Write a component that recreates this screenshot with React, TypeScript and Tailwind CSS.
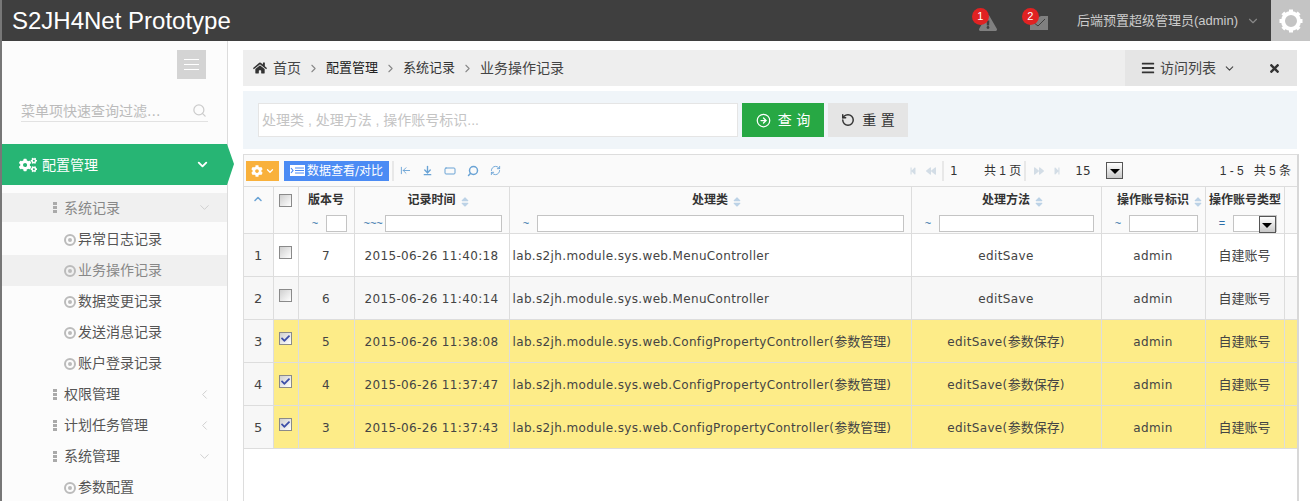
import {
  FaBackward,
  FaBars,
  FaCheck,
  FaCog,
  FaCogs,
  FaExclamationTriangle,
  FaForward,
  FaHome,
  FaSort,
  FaStepBackward,
  FaStepForward,
  FaTimes,
} from "react-icons/fa"
import {
  ArrowDownToLine,
  ArrowLeftToLine,
  ChevronDown,
  ChevronLeft,
  ChevronRight,
  ChevronUp,
  CircleArrowRight,
  RectangleHorizontal,
  RefreshCw,
  RotateCcw,
  Search,
} from "lucide-react"

const rows = [
  { n: 1, v: 7, t: "2015-06-26 11:40:18", c: "lab.s2jh.module.sys.web.MenuController", m: "editSave", on: false },
  { n: 2, v: 6, t: "2015-06-26 11:40:14", c: "lab.s2jh.module.sys.web.MenuController", m: "editSave", on: false },
  { n: 3, v: 5, t: "2015-06-26 11:38:08", c: "lab.s2jh.module.sys.web.ConfigPropertyController(参数管理)", m: "editSave(参数保存)", on: true },
  { n: 4, v: 4, t: "2015-06-26 11:37:47", c: "lab.s2jh.module.sys.web.ConfigPropertyController(参数管理)", m: "editSave(参数保存)", on: true },
  { n: 5, v: 3, t: "2015-06-26 11:37:43", c: "lab.s2jh.module.sys.web.ConfigPropertyController(参数管理)", m: "editSave(参数保存)", on: true },
]

// CJK runs are a size larger than the latin text in the cells
function Cell({ text }: { text: string }) {
  return (
    <>
      {text.split(/([\u4e00-\u9fa5]+)/).map((part, i) =>
        i % 2 ? (
          <span key={i} className="text-[13px] tracking-normal">{part}</span>
        ) : (
          <span key={i}>{part}</span>
        ),
      )}
    </>
  )
}

function Check({ on }: { on?: boolean }) {
  return (
    <span className="inline-flex w-[13px] h-[13px] items-center justify-center border border-[#8a8a8a] bg-gradient-to-br from-[#cfcfcf] to-white align-middle">
      {on && <FaCheck className="text-[#3d4fa8]" size={9} />}
    </span>
  )
}

function SelectArrow() {
  return (
    <span className="flex w-[17px] h-[17px] shrink-0 items-end justify-center border border-[#555] bg-gradient-to-b from-white to-[#c8c8c8] pb-[4px]">
      <span className="w-0 h-0 border-x-[5px] border-x-transparent border-t-[5px] border-t-black" />
    </span>
  )
}

function GroupItem({ label, open, active }: { label: string; open?: boolean; active?: boolean }) {
  return (
    <div className={`flex items-center pl-[51px] pr-[15px] ${active ? "text-[#888] bg-[#f0f0f0] h-[29px] mb-[2px]" : "text-[#555] h-[31px]"}`}>
      <span className="flex flex-col gap-[1px] mr-[7px]">
        <span className="w-[4px] h-[3px] bg-[#aaa]" />
        <span className="w-[4px] h-[3px] bg-[#aaa]" />
        <span className="w-[4px] h-[3px] bg-[#aaa]" />
      </span>
      <span className={`text-[14px] ${active ? "pt-[1px]" : ""}`}>{label}</span>
      <span className="ml-auto text-[#ccc]">
        {open ? <ChevronDown size={15} strokeWidth={1.5} /> : <ChevronLeft size={15} strokeWidth={1.5} />}
      </span>
    </div>
  )
}

function LeafItem({ label, active }: { label: string; active?: boolean }) {
  return (
    <div className={`flex items-center h-[31px] pl-[62px] ${active ? "bg-[#f0f0f0] text-[#888]" : "text-[#555]"}`}>
      <span className="flex items-center justify-center w-[12px] h-[12px] rounded-full border-2 border-[#bbb] mr-[2px]">
        <span className="w-[4px] h-[4px] rounded-full bg-[#bbb]" />
      </span>
      <span className="text-[14px]">{label}</span>
    </div>
  )
}

function Sidebar() {
  return (
    <aside className="w-[226px] shrink-0 h-full bg-[#fcfcfc] border-r border-[#dcdcdc] pt-[9px] relative">
      <div className="flex justify-end pr-[21px]">
        <div className="flex flex-col gap-[4px] w-[29px] h-[29px] items-center justify-center bg-[#d4d4d4]">
          <span className="w-[15px] h-px bg-white" />
          <span className="w-[15px] h-px bg-white" />
          <span className="w-[15px] h-px bg-white" />
        </div>
      </div>
      <div className="flex items-center justify-between mx-[19px] mt-[21px] h-[22px] border-b border-[#e2e2e2] text-[#bbb]">
        <span className="text-[14px] leading-none">菜单项快速查询过滤...</span>
        <Search size={15} className="text-[#ccc] mr-[1px]" />
      </div>
      <div className="mt-[22px] h-[41px] bg-[#27b574] text-white flex items-center pl-[17px] pr-[17px] relative">
        <FaCogs size={18} />
        <span className="ml-[5px] text-[14px] pt-[1px]">配置管理</span>
        <ChevronDown size={15} strokeWidth={3} className="ml-auto" />
        <svg className="absolute left-full top-0" width="8" height="41" viewBox="0 0 8 41">
          <path d="M0 0 L7 20 L0 41 Z" fill="#27b574" />
        </svg>
      </div>
      <div className="mt-[8px]">
        <GroupItem label="系统记录" open active />
        <LeafItem label="异常日志记录" />
        <LeafItem label="业务操作记录" active />
        <LeafItem label="数据变更记录" />
        <LeafItem label="发送消息记录" />
        <LeafItem label="账户登录记录" />
        <GroupItem label="权限管理" />
        <GroupItem label="计划任务管理" />
        <GroupItem label="系统管理" open />
        <LeafItem label="参数配置" />
      </div>
    </aside>
  )
}

function GearIcon() {
  return (
    <svg width="26" height="26" viewBox="0 0 26 26" fill="none" stroke="#fff">
      <circle cx="13" cy="13" r="8" strokeWidth="4" />
      {[0, 45, 90, 135, 180, 225, 270, 315].map((a) => (
        <path key={a} d="M13 1.5 V5" strokeWidth="4" transform={`rotate(${a} 13 13)`} />
      ))}
    </svg>
  )
}

function Header() {
  return (
    <header className="h-[41px] bg-[#3f3f3f] flex items-center text-white border-l-2 border-[#777]">
      <span className="ml-[10px] text-[24px] font-['Liberation_Sans',sans-serif]">S2JH4Net Prototype</span>
      <div className="ml-auto flex items-center h-full">
        <div className="relative mr-[33px] mt-[4px] text-[#808080]">
          <FaExclamationTriangle size={18} />
          <span className="absolute -left-[7px] -top-[6px] flex w-[17px] h-[17px] items-center justify-center rounded-full bg-[#e02222] text-[11px] font-['Liberation_Sans',sans-serif] text-white">1</span>
        </div>
        <div className="relative mr-[29px] mt-[4px]">
          <svg width="18" height="14" viewBox="0 0 18 14" className="block">
            <path d="M0 5 L11 0 L18 0 L18 14 L0 14 Z" fill="#808080" />
            <path d="M3 6 L8 10 L15 3" fill="none" stroke="#3f3f3f" strokeWidth="1" />
          </svg>
          <span className="absolute -left-[8px] -top-[8px] flex w-[17px] h-[17px] items-center justify-center rounded-full bg-[#e02222] text-[11px] font-['Liberation_Sans',sans-serif] text-white">2</span>
        </div>
        <span className="text-[13px] text-[#ccc] font-['Liberation_Sans','Noto_Sans_CJK_SC',sans-serif]">后端预置超级管理员(admin)</span>
        <ChevronDown size={14} className="ml-[8px] mr-[11px] text-[#888]" />
        <div className="flex w-[39px] h-full items-center justify-center bg-[#c4c4c4]">
          <GearIcon />
        </div>
      </div>
    </header>
  )
}

function Crumbs() {
  return (
    <div className="h-[36px] bg-[#eeeeee] flex items-center text-[14px] text-[#444]">
      <FaHome size={14} className="ml-[10px] mr-[6px] text-[#333]" />
      <span>首页</span>
      <ChevronRight size={13} className="mx-[6px] text-[#888]" />
      <span className="text-[13px] text-[#222]">配置管理</span>
      <ChevronRight size={13} className="mx-[6px] text-[#888]" />
      <span className="text-[13px] text-[#333]">系统记录</span>
      <ChevronRight size={13} className="mx-[6px] text-[#888]" />
      <span>业务操作记录</span>
      <div className="ml-auto flex items-center h-full w-[172px] bg-[#e5e5e5] pl-[16px]">
        <FaBars size={14} className="text-[#333]" />
        <span className="ml-[5px]">访问列表</span>
        <ChevronDown size={13} className="ml-[7px]" />
        <FaTimes size={13} className="ml-auto mr-[16px] text-[#333]" />
      </div>
    </div>
  )
}

function SearchPanel() {
  return (
    <div className="mt-[5px] h-[58px] bg-[#f0f5f9] flex items-center pl-[15px]">
      <div className="w-[480px] h-[34px] bg-white border border-[#e5e5e5] flex items-center pl-[3px] text-[14px] text-[#c4c4c4] font-['Liberation_Sans','Noto_Sans_CJK_SC',sans-serif]">
        处理类 , 处理方法 , 操作账号标识...
      </div>
      <button className="ml-[4px] w-[82px] h-[34px] bg-[#27a844] text-white flex items-center justify-center gap-[7px] text-[14px]">
        <CircleArrowRight size={15} />
        查 询
      </button>
      <button className="ml-[4px] w-[80px] h-[34px] bg-[#e5e5e5] text-[#333] flex items-center justify-center gap-[7px] text-[14px]">
        <RotateCcw size={14} strokeWidth={2.5} />
        重 置
      </button>
    </div>
  )
}

function Toolbar() {
  return (
    <div className="h-[32px] bg-[#fafafa] flex items-center border-b border-[#ddd] text-[12px] text-[#333] pl-[2px]">
      <div className="flex w-[33px] h-[20px] items-center justify-center gap-[2px] bg-[#f9b13c] text-white">
        <FaCog size={12} />
        <ChevronDown size={10} strokeWidth={3} />
      </div>
      <div className="ml-[5px] flex w-[105px] h-[20px] items-center justify-center gap-[2px] bg-[#4b8bf4] text-white">
        <svg width="15" height="11" viewBox="0 0 15 11" className="shrink-0">
          <rect width="15" height="11" fill="#fff" />
          <path d="M1 3 L3 5.5 L1 8" fill="none" stroke="#4b8bf4" strokeWidth="1.2" />
          <path d="M5 3 H14 M5 5.5 H14 M5 8 H14" stroke="#4b8bf4" strokeWidth="1" />
        </svg>
        数据查看/对比
      </div>
      <span className="ml-[3px] w-[2px] h-[20px] bg-[#e8e8e8]" />
      <div className="flex items-center gap-[11px] ml-[6px] text-[#6aa3d5]">
        <ArrowLeftToLine size={11} />
        <ArrowDownToLine size={11} strokeWidth={3} />
        <RectangleHorizontal size={12} />
        <Search size={12} className="-scale-x-100" strokeWidth={3} />
        <RefreshCw size={11} />
      </div>
      <div className="ml-[408px] flex items-center text-[#d3dde6] gap-[9px]">
        <FaStepBackward size={8} />
        <FaBackward size={10} />
      </div>
      <span className="ml-[6px] w-[2px] h-[20px] bg-[#e8e8e8]" />
      <span className="ml-[6px] w-[34px]">1</span>
      <span className="whitespace-nowrap font-['Liberation_Sans','Noto_Sans_CJK_SC',sans-serif]">共 1 页</span>
      <span className="ml-[3px] w-[2px] h-[20px] bg-[#e8e8e8]" />
      <div className="ml-[8px] flex items-center text-[#d3dde6] gap-[9px]">
        <FaForward size={10} />
        <FaStepForward size={8} />
      </div>
      <span className="ml-[14px] w-[31px]">15</span>
      <SelectArrow />
      <span className="ml-auto mr-[6px] whitespace-nowrap font-['Liberation_Sans','Noto_Sans_CJK_SC',sans-serif]">1 - 5&nbsp;&nbsp;&nbsp;共 5 条</span>
    </div>
  )
}

function Label({ text }: { text: string }) {
  return (
    <span className="relative">
      {text}
      <FaSort size={12} className="absolute left-full top-[3px] ml-[3px] text-[#bcd2e6]" />
    </span>
  )
}

function Filter({ sign, children }: { sign: string; children: React.ReactNode }) {
  return (
    <div className="flex items-center h-[17px] mt-[6px] text-[#2c6fa8] text-[11px] font-normal font-['Liberation_Sans',sans-serif]">
      <span className="w-[24px] shrink-0 pl-[9px] leading-none">{sign}</span>
      {children}
    </div>
  )
}

const box = "block h-[17px] border border-[#c4c4c4] bg-white"
const th = "border-r border-[#ddd] align-top pt-[4px] p-0 font-bold text-[12px] text-[#333] bg-[#fafafa]"
const td = "border-r border-[#ddd] text-center pt-[2px]"

function rowBg(r: { n: number; on: boolean }) {
  if (r.on) return "bg-[#fdec88]"
  return r.n === 2 ? "bg-[#f7f7f7]" : "bg-white"
}

function Grid() {
  return (
    <table className="table-fixed border-collapse w-[1053px] text-[12px] text-[#444] tracking-[0.35px]">
      <colgroup>
        <col className="w-[29px]" />
        <col className="w-[25px]" />
        <col className="w-[56px]" />
        <col className="w-[155px]" />
        <col className="w-[402px]" />
        <col className="w-[190px]" />
        <col className="w-[104px]" />
        <col className="w-[79px]" />
        <col className="w-[13px]" />
      </colgroup>
      <thead className="tracking-normal">
        <tr className="h-[46px] border-b border-[#ddd]">
          <th className={th}>
            <ChevronUp size={12} strokeWidth={3} className="mx-auto mt-[2px] text-[#6aa3d5]" />
          </th>
          <th className={th}><Check /></th>
          <th className={th}>
            版本号
            <Filter sign="~"><span className={`${box} w-[21px] ml-[3px]`} /></Filter>
          </th>
          <th className={th}>
            <Label text="记录时间" />
            <Filter sign="~~~"><span className={`${box} w-[117px] ml-[6px]`} /></Filter>
          </th>
          <th className={th}>
            <Label text="处理类" />
            <Filter sign="~"><span className={`${box} w-[367px] ml-[3px]`} /></Filter>
          </th>
          <th className={th}>
            <Label text="处理方法" />
            <Filter sign="~"><span className={`${box} w-[155px] ml-[3px]`} /></Filter>
          </th>
          <th className={th}>
            <Label text="操作账号标识" />
            <Filter sign="~"><span className={`${box} w-[69px] ml-[3px]`} /></Filter>
          </th>
          <th className={th}>
            <span className="block pl-[1px]">操作账号类型</span>
            <Filter sign="=">
              <span className={`${box} w-[44px] ml-[3px] flex justify-end`}><SelectArrow /></span>
            </Filter>
          </th>
          <th className="bg-[#fafafa]" />
        </tr>
      </thead>
      <tbody>
        {rows.map((r) => (
          <tr key={r.n} className="h-[43px] border-b border-[#ddd]">
            <td className={`${td} bg-[#f7f7f7] text-[13px]`}>{r.n}</td>
            <td className={`${td} ${rowBg(r)}`}>
              <span className="block -mt-[7px]"><Check on={r.on} /></span>
            </td>
            <td className={`${td} ${rowBg(r)}`}>{r.v}</td>
            <td className={`${td} ${rowBg(r)}`}>{r.t}</td>
            <td className={`${td} !text-left pl-[3px] whitespace-nowrap ${rowBg(r)}`}><Cell text={r.c} /></td>
            <td className={`${td} ${rowBg(r)}`}><Cell text={r.m} /></td>
            <td className={`${td} ${rowBg(r)}`}>admin</td>
            <td className={`${td} ${rowBg(r)}`}><Cell text="自建账号" /></td>
            <td className={rowBg(r)} />
          </tr>
        ))}
      </tbody>
    </table>
  )
}

export default function App() {
  return (
    <div className="w-[1310px] h-[501px] overflow-hidden bg-white font-['DejaVu_Sans','Noto_Sans_CJK_SC',sans-serif]">
      <Header />
      <div className="flex h-[460px] border-l-2 border-[#777]">
        <Sidebar />
        <main className="flex-1 min-w-0 pl-[15px] pr-[13px] pt-[9px]">
          <Crumbs />
          <SearchPanel />
          <div className="mt-[5px] w-[1056px] h-[400px] border border-[#ddd] border-r-2 border-r-[#d8d8d8]">
            <Toolbar />
            <Grid />
          </div>
        </main>
      </div>
    </div>
  )
}
